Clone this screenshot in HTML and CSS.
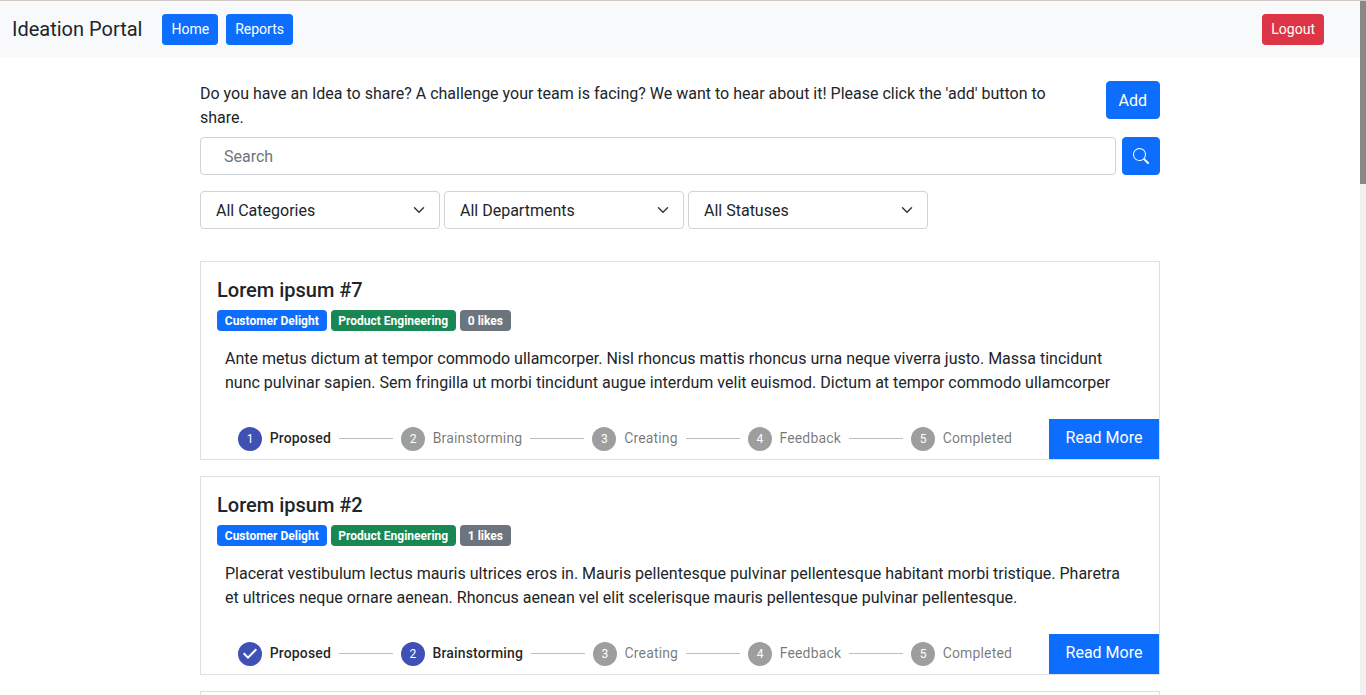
FILE: index.html
```html
<!DOCTYPE html>
<html lang="en">
<head>
<meta charset="utf-8">
<title>Ideation Portal</title>
<link rel="stylesheet" href="styles.css">
</head>
<body>
<div class="window">
  <div class="page">
    <nav class="navbar">
      <span class="brand">Ideation Portal</span>
      <button class="btn btn-sm">Home</button>
      <button class="btn btn-sm">Reports</button>
      <button class="btn btn-sm btn-danger">Logout</button>
    </nav>
    <main class="container">
      <div class="intro">
        <p class="intro-text">Do you have an Idea to share? A challenge your team is facing? We want to hear about it! Please click the 'add' button to share.</p>
        <button class="btn btn-add">Add</button>
      </div>
      <div class="search">
        <input class="search-input" type="text" placeholder="Search">
        <button class="btn btn-icon" aria-label="Search">
          <svg width="16" height="16" viewBox="0 0 16 16" fill="currentColor"><path d="M11.742 10.344a6.5 6.5 0 1 0-1.397 1.398h-.001c.03.04.062.078.098.115l3.85 3.85a1 1 0 0 0 1.415-1.414l-3.85-3.85a1.007 1.007 0 0 0-.115-.1zM12 6.5a5.5 5.5 0 1 1-11 0 5.5 5.5 0 0 1 11 0z"/></svg>
        </button>
      </div>
      <div class="filters">
        <div class="select"><span>All Categories</span><svg class="chevron" viewBox="0 0 16 16"><path d="M2 5l6 6 6-6"/></svg></div>
        <div class="select"><span>All Departments</span><svg class="chevron" viewBox="0 0 16 16"><path d="M2 5l6 6 6-6"/></svg></div>
        <div class="select"><span>All Statuses</span><svg class="chevron" viewBox="0 0 16 16"><path d="M2 5l6 6 6-6"/></svg></div>
      </div>

      <article class="card">
        <h5 class="card-title">Lorem ipsum #7</h5>
        <div class="badges"><span class="badge">Customer Delight</span><span class="badge badge-success">Product Engineering</span><span class="badge badge-secondary">0 likes</span></div>
        <p class="card-text">Ante metus dictum at tempor commodo ullamcorper. Nisl rhoncus mattis rhoncus urna neque viverra justo. Massa tincidunt nunc pulvinar sapien. Sem fringilla ut morbi tincidunt augue interdum velit euismod. Dictum at tempor commodo ullamcorper</p>
        <div class="card-footer">
          <div class="stepper">
            <div class="step active"><span class="dot">1</span><span class="label">Proposed</span></div>
            <i class="connector"></i>
            <div class="step"><span class="dot">2</span><span class="label">Brainstorming</span></div>
            <i class="connector"></i>
            <div class="step"><span class="dot">3</span><span class="label">Creating</span></div>
            <i class="connector"></i>
            <div class="step"><span class="dot">4</span><span class="label">Feedback</span></div>
            <i class="connector"></i>
            <div class="step"><span class="dot">5</span><span class="label">Completed</span></div>
          </div>
          <button class="btn read-more">Read More</button>
        </div>
      </article>

      <article class="card">
        <h5 class="card-title">Lorem ipsum #2</h5>
        <div class="badges"><span class="badge">Customer Delight</span><span class="badge badge-success">Product Engineering</span><span class="badge badge-secondary">1 likes</span></div>
        <p class="card-text">Placerat vestibulum lectus mauris ultrices eros in. Mauris pellentesque pulvinar pellentesque habitant morbi tristique. Pharetra et ultrices neque ornare aenean. Rhoncus aenean vel elit scelerisque mauris pellentesque pulvinar pellentesque.</p>
        <div class="card-footer">
          <div class="stepper">
            <div class="step active"><svg class="check" viewBox="0 0 24 24"><path d="M12 0a12 12 0 1 0 0 24 12 12 0 0 0 0-24zm-2 17l-5-5 1.4-1.4 3.6 3.6 7.6-7.6L19 8l-9 9z"/></svg><span class="label">Proposed</span></div>
            <i class="connector"></i>
            <div class="step active"><span class="dot">2</span><span class="label">Brainstorming</span></div>
            <i class="connector"></i>
            <div class="step"><span class="dot">3</span><span class="label">Creating</span></div>
            <i class="connector"></i>
            <div class="step"><span class="dot">4</span><span class="label">Feedback</span></div>
            <i class="connector"></i>
            <div class="step"><span class="dot">5</span><span class="label">Completed</span></div>
          </div>
          <button class="btn read-more">Read More</button>
        </div>
      </article>

      <article class="card"></article>
    </main>
  </div>
  <div class="scrollbar"><div class="thumb"></div></div>
</div>
</body>
</html>
```
FILE: styles.css
```css
* { box-sizing: border-box; }
body {
  margin: 0;
  overflow: hidden;
  font: 400 16px/24px Roboto, sans-serif;
  color: #212529;
  background: #fff;
}
.window {
  display: flex;
  height: 695px;
  overflow: hidden;
  border-top: 1px solid #cfc8c2;
}
.page { flex: 1; overflow: hidden; }
.scrollbar { width: 6px; background: #f1f1f1; }
.thumb { height: 183px; background: #888886; }

.navbar {
  display: flex;
  align-items: center;
  gap: 8px;
  height: 56px;
  padding: 0 36px 0 12px;
  background: #f8f9fa;
}
.brand { margin-right: 12px; font-size: 20px; line-height: 30px; }

.btn {
  padding: 6px 12px;
  border: 1px solid #0d6efd;
  border-radius: 4px;
  background: #0d6efd;
  color: #fff;
  font: 400 16px/24px Roboto, sans-serif;
}
.btn-sm { padding: 4px 8px; border-radius: 3.2px; font-size: 14px; line-height: 21px; }
.btn-danger { margin-left: auto; border-color: #dc3545; background: #dc3545; }
.btn-add { padding: 7px 12px 5px; }
.btn-icon { width: 38px; height: 38px; padding: 0; }
.btn-icon svg { display: block; margin: auto; }

.container { width: 960px; margin: 24px auto 0; }
.intro { display: flex; align-items: flex-start; justify-content: space-between; }
.intro-text { width: 860px; margin: 0; padding-top: 1px; }
.search { display: flex; gap: 6px; margin-top: 7px; }
.search-input {
  flex: 1;
  height: 38px;
  padding: 6px 23px;
  border: 1px solid #ced4da;
  border-radius: 4px;
  font: inherit;
}
.search-input::placeholder { color: #6c757d; opacity: 1; }
.filters { display: flex; gap: 4px; margin: 16px 0 32px; }
.select {
  display: flex;
  align-items: center;
  justify-content: space-between;
  width: 240px;
  height: 38px;
  padding: 0 12px 0 15px;
  border: 1px solid #ced4da;
  border-radius: 4px;
}
.select span { padding-top: 2px; }
.chevron {
  width: 16px;
  height: 12px;
  fill: none;
  stroke: #343a40;
  stroke-width: 2;
  stroke-linecap: round;
  stroke-linejoin: round;
}

.card {
  display: flex;
  flex-direction: column;
  height: 199px;
  margin-bottom: 16px;
  padding-top: 16px;
  border: 1px solid #dfdfdf;
}
.card-title { margin: 0 16px 8px; font-size: 20px; font-weight: 500; line-height: 24px; }
.badges { display: flex; gap: 4px; margin: 0 16px; }
.badge {
  height: 21px;
  padding: 5px 7.8px 4px;
  border-radius: 4px;
  background: #0d6efd;
  color: #fff;
  font-size: 12px;
  font-weight: 700;
  line-height: 12px;
}
.badge-success { background: #198754; }
.badge-secondary { background: #6c757d; }
.card-text { margin: 16px 24px 0; }
.card-footer { display: flex; align-items: flex-end; justify-content: space-between; margin-top: auto; }
.read-more { width: 110px; height: 40px; padding: 0 0 2px; border-radius: 0; }

.stepper { display: flex; align-items: center; gap: 8px; width: 774px; margin: 0 0 8px 37px; }
.step {
  display: flex;
  align-items: center;
  gap: 7.7px;
  font-size: 14px;
  line-height: 20px;
  letter-spacing: 0.01071em;
  color: rgba(0, 0, 0, 0.54);
}
.step.active { font-weight: 500; color: rgba(0, 0, 0, 0.87); }
.label { padding-bottom: 2px; }
.dot {
  width: 24px;
  height: 24px;
  border-radius: 50%;
  background: #9e9e9e;
  color: #fff;
  font-size: 12px;
  font-weight: 400;
  line-height: 25px;
  letter-spacing: 0;
  text-align: center;
}
.active .dot { background: #3f51b5; }
.check { width: 24px; height: 24px; fill: #3f51b5; }
.connector { flex: 1; margin-bottom: 1px; border-top: 1px solid #bdbdbd; }
```
